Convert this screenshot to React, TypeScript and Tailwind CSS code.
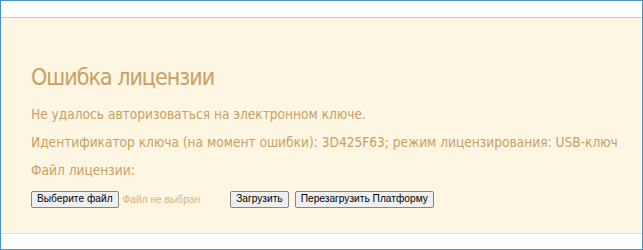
export default function App() {
  return (
    <div className="w-[643px] h-[250px] border border-[#4a90c8] bg-white flex flex-col overflow-hidden">
      <div className="h-[16px] shrink-0" />
      <section
        className="h-[217px] shrink-0 bg-[#fdf6e3] border-t border-[#dcc799] border-b border-b-[#f5e0b0] px-[30px] pt-[45px]"
        style={{ fontFamily: '"DejaVu Sans Condensed", "DejaVu Sans", Verdana, sans-serif' }}
      >
        <h1 className="text-[23px] leading-[28px] tracking-[-1px] text-[#c9a063] font-normal">Ошибка лицензии</h1>
        <div className="mt-[9px] text-[13.6px] leading-[28px] text-[#c8a064] whitespace-nowrap">
          <p>Не удалось авторизоваться на электронном ключе.</p>
          <p>Идентификатор ключа (на момент ошибки): 3D425F63; режим лицензирования: USB-ключ</p>
          <p>Файл лицензии:</p>
        </div>
        <div
          className="mt-[7px] flex items-center text-[10.2px]"
          style={{ fontFamily: '"Liberation Sans", Arial, sans-serif' }}
        >
          <button className="h-[17px] px-[5px] leading-none bg-[#efefef] border border-[#858585] rounded-[2px] text-black">
            Выберите файл
          </button>
          <span className="ml-[4px] text-[#d6b47f]">Файл не выбран</span>
          <button className="ml-[30px] h-[17px] px-[5px] leading-none bg-[#efefef] border border-[#858585] rounded-[2px] text-black">
            Загрузить
          </button>
          <button className="ml-[6px] h-[17px] px-[5px] leading-none bg-[#efefef] border border-[#858585] rounded-[2px] text-black">
            Перезагрузить Платформу
          </button>
        </div>
      </section>
    </div>
  );
}
